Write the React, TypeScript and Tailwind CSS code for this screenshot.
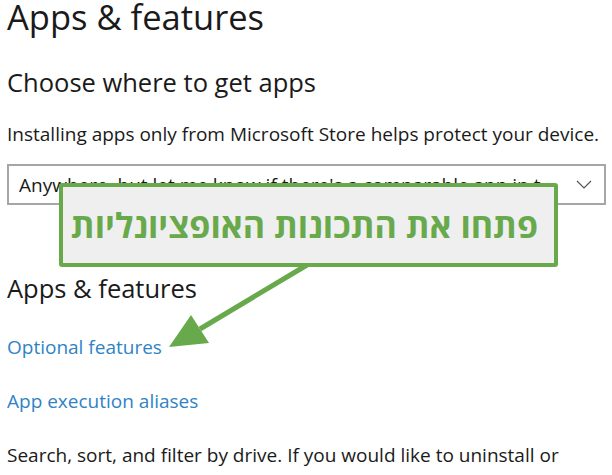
export default function App() {
  return (
    <div
      className="relative h-[475px] w-[612px] overflow-hidden bg-white text-[#1a1a1a]"
      style={{ fontFamily: '"Open Sans", "Noto Sans", sans-serif' }}
    >
      <div className="-mt-[3px] pl-[7px] pr-[6px]">
        <h1 className="text-[34.5px] leading-[40px] font-normal">Apps &amp; features</h1>
        <h2 className="mt-[29px] text-[25.5px] leading-[32px] font-normal">
          Choose where to get apps
        </h2>
        <p className="mt-[24px] text-[19px] leading-[24px]">
          Installing apps only from Microsoft Store helps protect your device.
        </p>

        {/* Dropdown */}
        <div className="mt-[18px] flex h-[41px] items-center border-2 border-[#a6a6a6] pl-[10px] pr-[12px]">
          <span className="flex-1 truncate text-[19px] leading-[26px]">
            Anywhere, but let me know if there's a comparable app in the Microsoft Store
          </span>
          <svg width="16" height="9" viewBox="0 0 16 9" className="ml-[14px] shrink-0">
            <path d="M1 1 L8 8 L15 1" fill="none" stroke="#555" strokeWidth="1.2" />
          </svg>
        </div>

        <h2 className="mt-[67px] text-[25.5px] leading-[32px] font-normal">
          Apps &amp; features
        </h2>
        <a className="mt-[31px] block text-[19px] leading-[24px] text-[#2f83c5]">
          Optional features
        </a>
        <a className="mt-[30px] block text-[19px] leading-[24px] text-[#2f83c5]">
          App execution aliases
        </a>
        <p className="mt-[30px] text-[19px] leading-[24px]">
          Search, sort, and filter by drive. If you would like to uninstall or
        </p>
      </div>

      {/* Callout */}
      <div
        dir="rtl"
        className="absolute left-[59px] top-[183px] flex h-[84px] w-[499px] items-center rounded-[3px] border-4 border-[#68a94c] bg-[#efefef] pr-[16px]"
      >
        <span className="text-[34px] font-bold leading-none text-[#68a94c]">
          פתחו את התכונות האופציונליות
        </span>
      </div>

      {/* Arrow */}
      <svg
        className="pointer-events-none absolute left-0 top-0"
        width="612"
        height="475"
        viewBox="0 0 612 475"
      >
        <line x1="307" y1="265" x2="200" y2="329" stroke="#68a94c" strokeWidth="5" />
        <polygon points="169,347 191,315 209,343" fill="#68a94c" />
      </svg>
    </div>
  )
}
